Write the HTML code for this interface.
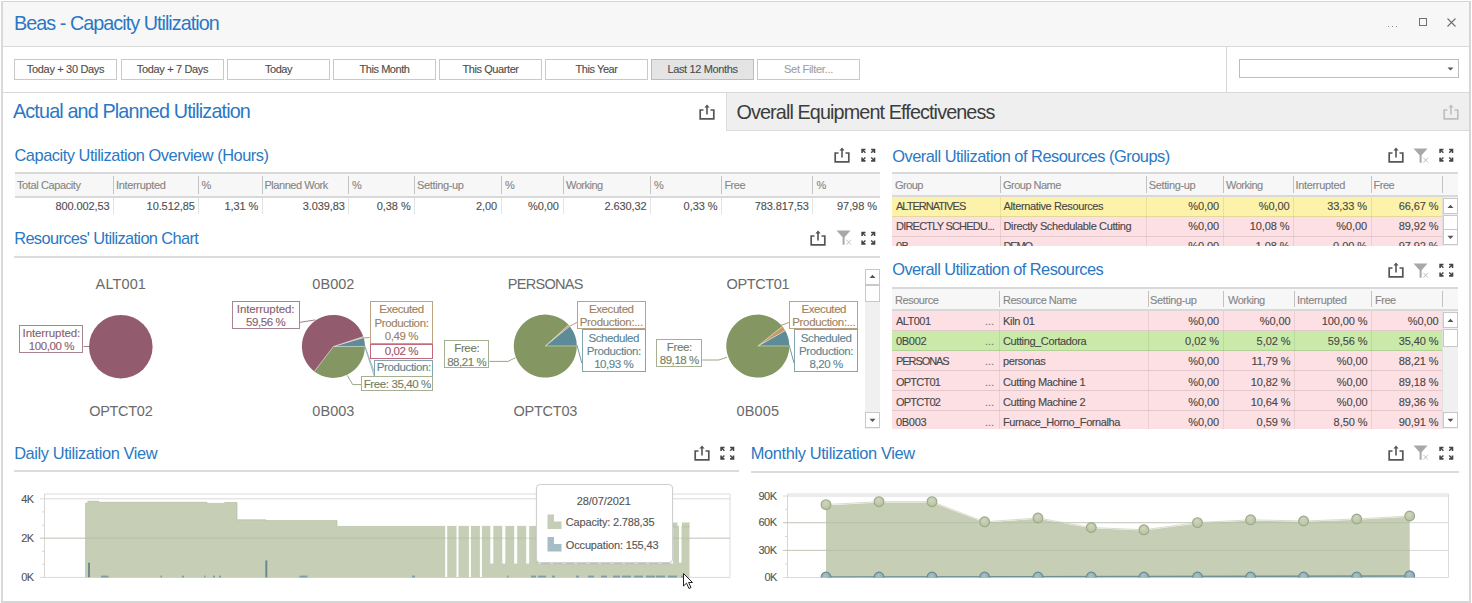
<!DOCTYPE html>
<html><head><meta charset="utf-8">
<style>
*{box-sizing:border-box;margin:0;padding:0}
html,body{width:1472px;height:603px;overflow:hidden;background:#fff;font-family:"Liberation Sans", sans-serif}
.a{position:absolute}
.t{position:absolute;white-space:nowrap;-webkit-text-stroke:0.12px currentColor}
</style></head><body>
<div class="a" style="left:0px;top:0px;width:1472px;height:603px;background:#ffffff;"></div><div class="a" style="left:1px;top:1px;width:1470px;height:45px;background:#f7f7f7;"></div><div class="a" style="left:1px;top:46px;width:1470px;height:1px;background:#dadada;"></div><div class="a" style="left:1388px;top:26px;width:1px;height:1px;background:#8a8a8a;"></div><div class="a" style="left:1392px;top:26px;width:1px;height:1px;background:#8a8a8a;"></div><div class="a" style="left:1396px;top:26px;width:1px;height:1px;background:#8a8a8a;"></div><div class="a" style="left:1419px;top:18px;width:8px;height:8px;border:1px solid #707070;background:transparent;border-width:1.3px"></div><svg class="a" style="left:1447px;top:18px" width="10" height="10"><path d="M0.5 0.5L8.5 8.5M8.5 0.5L0.5 8.5" stroke="#707070" stroke-width="1.1"/></svg><div class="a" style="left:1px;top:91.5px;width:1470px;height:1.8px;background:#d9d9d9;"></div><div class="a" style="left:1226px;top:47px;width:1px;height:45px;background:#d6d6d6;"></div><div class="a" style="left:14px;top:59px;width:103px;height:21px;border:1px solid #c9c9c9;background:#ffffff;"></div><div class="a" style="left:121px;top:59px;width:103px;height:21px;border:1px solid #c9c9c9;background:#ffffff;"></div><div class="a" style="left:227px;top:59px;width:103px;height:21px;border:1px solid #c9c9c9;background:#ffffff;"></div><div class="a" style="left:333px;top:59px;width:103px;height:21px;border:1px solid #c9c9c9;background:#ffffff;"></div><div class="a" style="left:439px;top:59px;width:103px;height:21px;border:1px solid #c9c9c9;background:#ffffff;"></div><div class="a" style="left:545px;top:59px;width:103px;height:21px;border:1px solid #c9c9c9;background:#ffffff;"></div><div class="a" style="left:651px;top:59px;width:103px;height:21px;border:1px solid #bdbdbd;background:#e4e4e4;"></div><div class="a" style="left:757px;top:59px;width:103px;height:21px;border:1px solid #c9c9c9;background:#ffffff;"></div><div class="a" style="left:1239px;top:59px;width:220px;height:19px;border:1px solid #bdbdbd;background:#fff;"></div><svg class="a" style="left:1447px;top:67px" width="8" height="4"><path d="M0.5 0.5L6.5 0.5L3.5 3.5Z" fill="#555"/></svg><div class="a" style="left:726px;top:93px;width:745px;height:37px;background:#efefef;"></div><div class="a" style="left:726px;top:93px;width:1px;height:38px;background:#dedede;"></div><div class="a" style="left:726px;top:130px;width:745px;height:1px;background:#dcdcdc;"></div><svg class="a" style="left:699px;top:104px" width="16" height="16" viewBox="0 0 16 16"><path d="M4.5 6H1.2V14.8H14.8V6H11.5" fill="none" stroke="#555555" stroke-width="1.7"/><path d="M8 2V10.5" stroke="#555555" stroke-width="1.6"/><path d="M5.4 3.6L8 0.6L10.6 3.6Z" fill="#555555"/></svg><svg class="a" style="left:1443px;top:104px" width="16" height="16" viewBox="0 0 16 16"><path d="M4.5 6H1.2V14.8H14.8V6H11.5" fill="none" stroke="#bfbfbf" stroke-width="1.7"/><path d="M8 2V10.5" stroke="#bfbfbf" stroke-width="1.6"/><path d="M5.4 3.6L8 0.6L10.6 3.6Z" fill="#bfbfbf"/></svg><svg class="a" style="left:834px;top:147px" width="16" height="16" viewBox="0 0 16 16"><path d="M4.5 6H1.2V14.8H14.8V6H11.5" fill="none" stroke="#555555" stroke-width="1.7"/><path d="M8 2V10.5" stroke="#555555" stroke-width="1.6"/><path d="M5.4 3.6L8 0.6L10.6 3.6Z" fill="#555555"/></svg><svg class="a" style="left:861px;top:148px" width="15" height="14" viewBox="0 0 15 14"><g fill="#444444" transform="translate(0.3 0.7)"><path d="M0 0H4.2V1.6H2.6L4.6 3.6L3.6 4.6L1.6 2.6V4.2H0Z"/><path d="M14 0H9.8V1.6H11.4L9.4 3.6L10.4 4.6L12.4 2.6V4.2H14Z"/><path d="M0 13H4.2V11.4H2.6L4.6 9.4L3.6 8.4L1.6 10.4V8.8H0Z"/><path d="M14 13H9.8V11.4H11.4L9.4 9.4L10.4 8.4L12.4 10.4V8.8H14Z"/></g></svg><div class="a" style="left:15px;top:172px;width:865px;height:2px;background:#d9d9d9;"></div><div class="a" style="left:15px;top:174px;width:865px;height:22px;background:#f7f7f7;"></div><div class="a" style="left:15px;top:196px;width:865px;height:2px;background:#d9d9d9;"></div><div class="a" style="left:113px;top:176px;width:1px;height:18px;background:#c4c4c4;"></div><div class="a" style="left:113px;top:198px;width:1px;height:16px;background:#e4e4e4;"></div><div class="a" style="left:198px;top:176px;width:1px;height:18px;background:#c4c4c4;"></div><div class="a" style="left:198px;top:198px;width:1px;height:16px;background:#e4e4e4;"></div><div class="a" style="left:262px;top:176px;width:1px;height:18px;background:#c4c4c4;"></div><div class="a" style="left:262px;top:198px;width:1px;height:16px;background:#e4e4e4;"></div><div class="a" style="left:348px;top:176px;width:1px;height:18px;background:#c4c4c4;"></div><div class="a" style="left:348px;top:198px;width:1px;height:16px;background:#e4e4e4;"></div><div class="a" style="left:414px;top:176px;width:1px;height:18px;background:#c4c4c4;"></div><div class="a" style="left:414px;top:198px;width:1px;height:16px;background:#e4e4e4;"></div><div class="a" style="left:501px;top:176px;width:1px;height:18px;background:#c4c4c4;"></div><div class="a" style="left:501px;top:198px;width:1px;height:16px;background:#e4e4e4;"></div><div class="a" style="left:563px;top:176px;width:1px;height:18px;background:#c4c4c4;"></div><div class="a" style="left:563px;top:198px;width:1px;height:16px;background:#e4e4e4;"></div><div class="a" style="left:650px;top:176px;width:1px;height:18px;background:#c4c4c4;"></div><div class="a" style="left:650px;top:198px;width:1px;height:16px;background:#e4e4e4;"></div><div class="a" style="left:721px;top:176px;width:1px;height:18px;background:#c4c4c4;"></div><div class="a" style="left:721px;top:198px;width:1px;height:16px;background:#e4e4e4;"></div><div class="a" style="left:812px;top:176px;width:1px;height:18px;background:#c4c4c4;"></div><div class="a" style="left:812px;top:198px;width:1px;height:16px;background:#e4e4e4;"></div><svg class="a" style="left:810px;top:230px" width="16" height="16" viewBox="0 0 16 16"><path d="M4.5 6H1.2V14.8H14.8V6H11.5" fill="none" stroke="#555555" stroke-width="1.7"/><path d="M8 2V10.5" stroke="#555555" stroke-width="1.6"/><path d="M5.4 3.6L8 0.6L10.6 3.6Z" fill="#555555"/></svg><svg class="a" style="left:836px;top:230px" width="16" height="16" viewBox="0 0 16 16"><path d="M0.5 0.5H14.5L8.6 7.2V14.8H6.6V7.2Z" fill="#a8a8a8"/><path d="M10.4 9.8L15 14.6M15 9.8L10.4 14.6" stroke="#b8b8b8" stroke-width="0.9"/></svg><svg class="a" style="left:861px;top:231px" width="15" height="14" viewBox="0 0 15 14"><g fill="#444444" transform="translate(0.3 0.7)"><path d="M0 0H4.2V1.6H2.6L4.6 3.6L3.6 4.6L1.6 2.6V4.2H0Z"/><path d="M14 0H9.8V1.6H11.4L9.4 3.6L10.4 4.6L12.4 2.6V4.2H14Z"/><path d="M0 13H4.2V11.4H2.6L4.6 9.4L3.6 8.4L1.6 10.4V8.8H0Z"/><path d="M14 13H9.8V11.4H11.4L9.4 9.4L10.4 8.4L12.4 10.4V8.8H14Z"/></g></svg><div class="a" style="left:14px;top:256px;width:866px;height:2px;background:#dcdcdc;"></div><svg class="a" style="left:694px;top:445px" width="16" height="16" viewBox="0 0 16 16"><path d="M4.5 6H1.2V14.8H14.8V6H11.5" fill="none" stroke="#555555" stroke-width="1.7"/><path d="M8 2V10.5" stroke="#555555" stroke-width="1.6"/><path d="M5.4 3.6L8 0.6L10.6 3.6Z" fill="#555555"/></svg><svg class="a" style="left:720px;top:446px" width="15" height="14" viewBox="0 0 15 14"><g fill="#444444" transform="translate(0.3 0.7)"><path d="M0 0H4.2V1.6H2.6L4.6 3.6L3.6 4.6L1.6 2.6V4.2H0Z"/><path d="M14 0H9.8V1.6H11.4L9.4 3.6L10.4 4.6L12.4 2.6V4.2H14Z"/><path d="M0 13H4.2V11.4H2.6L4.6 9.4L3.6 8.4L1.6 10.4V8.8H0Z"/><path d="M14 13H9.8V11.4H11.4L9.4 9.4L10.4 8.4L12.4 10.4V8.8H14Z"/></g></svg><div class="a" style="left:14px;top:470px;width:725px;height:2px;background:#dcdcdc;"></div><svg class="a" style="left:1388px;top:445px" width="16" height="16" viewBox="0 0 16 16"><path d="M4.5 6H1.2V14.8H14.8V6H11.5" fill="none" stroke="#555555" stroke-width="1.7"/><path d="M8 2V10.5" stroke="#555555" stroke-width="1.6"/><path d="M5.4 3.6L8 0.6L10.6 3.6Z" fill="#555555"/></svg><svg class="a" style="left:1413px;top:445px" width="16" height="16" viewBox="0 0 16 16"><path d="M0.5 0.5H14.5L8.6 7.2V14.8H6.6V7.2Z" fill="#a8a8a8"/><path d="M10.4 9.8L15 14.6M15 9.8L10.4 14.6" stroke="#b8b8b8" stroke-width="0.9"/></svg><svg class="a" style="left:1439px;top:446px" width="15" height="14" viewBox="0 0 15 14"><g fill="#444444" transform="translate(0.3 0.7)"><path d="M0 0H4.2V1.6H2.6L4.6 3.6L3.6 4.6L1.6 2.6V4.2H0Z"/><path d="M14 0H9.8V1.6H11.4L9.4 3.6L10.4 4.6L12.4 2.6V4.2H14Z"/><path d="M0 13H4.2V11.4H2.6L4.6 9.4L3.6 8.4L1.6 10.4V8.8H0Z"/><path d="M14 13H9.8V11.4H11.4L9.4 9.4L10.4 8.4L12.4 10.4V8.8H14Z"/></g></svg><div class="a" style="left:751px;top:471px;width:708px;height:2px;background:#dcdcdc;"></div><svg class="a" style="left:1388px;top:147px" width="16" height="16" viewBox="0 0 16 16"><path d="M4.5 6H1.2V14.8H14.8V6H11.5" fill="none" stroke="#555555" stroke-width="1.7"/><path d="M8 2V10.5" stroke="#555555" stroke-width="1.6"/><path d="M5.4 3.6L8 0.6L10.6 3.6Z" fill="#555555"/></svg><svg class="a" style="left:1413px;top:148px" width="16" height="16" viewBox="0 0 16 16"><path d="M0.5 0.5H14.5L8.6 7.2V14.8H6.6V7.2Z" fill="#a8a8a8"/><path d="M10.4 9.8L15 14.6M15 9.8L10.4 14.6" stroke="#b8b8b8" stroke-width="0.9"/></svg><svg class="a" style="left:1439px;top:148px" width="15" height="14" viewBox="0 0 15 14"><g fill="#444444" transform="translate(0.3 0.7)"><path d="M0 0H4.2V1.6H2.6L4.6 3.6L3.6 4.6L1.6 2.6V4.2H0Z"/><path d="M14 0H9.8V1.6H11.4L9.4 3.6L10.4 4.6L12.4 2.6V4.2H14Z"/><path d="M0 13H4.2V11.4H2.6L4.6 9.4L3.6 8.4L1.6 10.4V8.8H0Z"/><path d="M14 13H9.8V11.4H11.4L9.4 9.4L10.4 8.4L12.4 10.4V8.8H14Z"/></g></svg><svg class="a" style="left:1388px;top:262px" width="16" height="16" viewBox="0 0 16 16"><path d="M4.5 6H1.2V14.8H14.8V6H11.5" fill="none" stroke="#555555" stroke-width="1.7"/><path d="M8 2V10.5" stroke="#555555" stroke-width="1.6"/><path d="M5.4 3.6L8 0.6L10.6 3.6Z" fill="#555555"/></svg><svg class="a" style="left:1413px;top:263px" width="16" height="16" viewBox="0 0 16 16"><path d="M0.5 0.5H14.5L8.6 7.2V14.8H6.6V7.2Z" fill="#a8a8a8"/><path d="M10.4 9.8L15 14.6M15 9.8L10.4 14.6" stroke="#b8b8b8" stroke-width="0.9"/></svg><svg class="a" style="left:1439px;top:263px" width="15" height="14" viewBox="0 0 15 14"><g fill="#444444" transform="translate(0.3 0.7)"><path d="M0 0H4.2V1.6H2.6L4.6 3.6L3.6 4.6L1.6 2.6V4.2H0Z"/><path d="M14 0H9.8V1.6H11.4L9.4 3.6L10.4 4.6L12.4 2.6V4.2H14Z"/><path d="M0 13H4.2V11.4H2.6L4.6 9.4L3.6 8.4L1.6 10.4V8.8H0Z"/><path d="M14 13H9.8V11.4H11.4L9.4 9.4L10.4 8.4L12.4 10.4V8.8H14Z"/></g></svg><div class="a" style="left:892px;top:172px;width:566px;height:2px;background:#d9d9d9;"></div><div class="a" style="left:892px;top:174px;width:566px;height:21px;background:#f7f7f7;"></div><div class="a" style="left:892px;top:195px;width:566px;height:2px;background:#d9d9d9;"></div><div class="a" style="left:999.5px;top:176px;width:1px;height:17px;background:#c2c2c2;"></div><div class="a" style="left:1146px;top:176px;width:1px;height:17px;background:#c2c2c2;"></div><div class="a" style="left:1222.5px;top:176px;width:1px;height:17px;background:#c2c2c2;"></div><div class="a" style="left:1293px;top:176px;width:1px;height:17px;background:#c2c2c2;"></div><div class="a" style="left:1370.5px;top:176px;width:1px;height:17px;background:#c2c2c2;"></div><div class="a" style="left:1442px;top:176px;width:1px;height:17px;background:#c2c2c2;"></div><div class="a" style="left:892px;top:197px;width:566px;height:48.5px;overflow:hidden"><div class="a" style="left:0;top:0px;width:550px;height:19.8px;background:#fdf2aa;border-bottom:1px solid rgba(0,0,0,0.1)"></div><div class="a" style="left:107.5px;top:0px;width:1px;height:19.8px;background:rgba(0,0,0,0.07)"></div><div class="a" style="left:254px;top:0px;width:1px;height:19.8px;background:rgba(0,0,0,0.07)"></div><div class="a" style="left:330.5px;top:0px;width:1px;height:19.8px;background:rgba(0,0,0,0.07)"></div><div class="a" style="left:401px;top:0px;width:1px;height:19.8px;background:rgba(0,0,0,0.07)"></div><div class="a" style="left:478.5px;top:0px;width:1px;height:19.8px;background:rgba(0,0,0,0.07)"></div><div class="t" style="font-size:11px;color:#474747;letter-spacing:-0.963px;left:4px;top:3.24px;line-height:12.6px">ALTERNATIVES</div><div class="t" style="font-size:11px;color:#474747;letter-spacing:-0.378px;left:111.5px;top:3.24px;line-height:12.6px">Alternative Resources</div><div class="t" style="font-size:11px;color:#474747;letter-spacing:-0.073px;right:239.0px;top:3.24px;line-height:12.6px">%0,00</div><div class="t" style="font-size:11px;color:#474747;letter-spacing:-0.073px;right:168.5px;top:3.24px;line-height:12.6px">%0,00</div><div class="t" style="font-size:11px;color:#474747;letter-spacing:-0.070px;right:91.0px;top:3.24px;line-height:12.6px">33,33 %</div><div class="t" style="font-size:11px;color:#474747;letter-spacing:-0.070px;right:19.5px;top:3.24px;line-height:12.6px">66,67 %</div><div class="a" style="left:0;top:19.8px;width:550px;height:19.8px;background:#fde0e4;border-bottom:1px solid rgba(0,0,0,0.1)"></div><div class="a" style="left:107.5px;top:19.8px;width:1px;height:19.8px;background:rgba(0,0,0,0.07)"></div><div class="a" style="left:254px;top:19.8px;width:1px;height:19.8px;background:rgba(0,0,0,0.07)"></div><div class="a" style="left:330.5px;top:19.8px;width:1px;height:19.8px;background:rgba(0,0,0,0.07)"></div><div class="a" style="left:401px;top:19.8px;width:1px;height:19.8px;background:rgba(0,0,0,0.07)"></div><div class="a" style="left:478.5px;top:19.8px;width:1px;height:19.8px;background:rgba(0,0,0,0.07)"></div><div class="t" style="font-size:11px;color:#474747;letter-spacing:-0.784px;left:4px;top:23.05px;line-height:12.6px">DIRECTLY SCHEDU...</div><div class="t" style="font-size:11px;color:#474747;letter-spacing:-0.369px;left:111.5px;top:23.05px;line-height:12.6px">Directly Schedulable Cutting</div><div class="t" style="font-size:11px;color:#474747;letter-spacing:-0.073px;right:239.0px;top:23.05px;line-height:12.6px">%0,00</div><div class="t" style="font-size:11px;color:#474747;letter-spacing:-0.070px;right:168.5px;top:23.05px;line-height:12.6px">10,08 %</div><div class="t" style="font-size:11px;color:#474747;letter-spacing:-0.073px;right:91.0px;top:23.05px;line-height:12.6px">%0,00</div><div class="t" style="font-size:11px;color:#474747;letter-spacing:-0.070px;right:19.5px;top:23.05px;line-height:12.6px">89,92 %</div><div class="a" style="left:0;top:39.6px;width:550px;height:19.8px;background:#fde0e4;border-bottom:1px solid rgba(0,0,0,0.1)"></div><div class="a" style="left:107.5px;top:39.6px;width:1px;height:19.8px;background:rgba(0,0,0,0.07)"></div><div class="a" style="left:254px;top:39.6px;width:1px;height:19.8px;background:rgba(0,0,0,0.07)"></div><div class="a" style="left:330.5px;top:39.6px;width:1px;height:19.8px;background:rgba(0,0,0,0.07)"></div><div class="a" style="left:401px;top:39.6px;width:1px;height:19.8px;background:rgba(0,0,0,0.07)"></div><div class="a" style="left:478.5px;top:39.6px;width:1px;height:19.8px;background:rgba(0,0,0,0.07)"></div><div class="t" style="font-size:11px;color:#474747;letter-spacing:-0.575px;left:4px;top:42.84px;line-height:12.6px">0B</div><div class="t" style="font-size:11px;color:#474747;letter-spacing:-1.155px;left:111.5px;top:42.84px;line-height:12.6px">DEMO</div><div class="t" style="font-size:11px;color:#474747;letter-spacing:-0.073px;right:239.0px;top:42.84px;line-height:12.6px">%0,00</div><div class="t" style="font-size:11px;color:#474747;letter-spacing:-0.061px;right:168.5px;top:42.84px;line-height:12.6px">1,08 %</div><div class="t" style="font-size:11px;color:#474747;letter-spacing:-0.061px;right:91.0px;top:42.84px;line-height:12.6px">0,00 %</div><div class="t" style="font-size:11px;color:#474747;letter-spacing:-0.070px;right:19.5px;top:42.84px;line-height:12.6px">97,92 %</div><div class="a" style="left:550px;top:0;width:16px;height:48.5px;background:#f0f0f0;border-left:1px solid #e0e0e0"></div><div class="a" style="left:551px;top:1px;width:15px;height:16px;background:#fff;border:1px solid #c8c8c8"></div><svg class="a" style="left:555px;top:7px" width="8" height="5"><path d="M0.5 4L3.5 0.8L6.5 4Z" fill="#555"/></svg><div class="a" style="left:551px;top:18px;width:15px;height:18px;background:#fff;border:1px solid #c8c8c8"></div><div class="a" style="left:551px;top:31.5px;width:15px;height:16px;background:#fff;border:1px solid #c8c8c8"></div><svg class="a" style="left:555px;top:37.5px" width="8" height="5"><path d="M0.5 0.8L3.5 4L6.5 0.8Z" fill="#555"/></svg></div><div class="a" style="left:892px;top:287px;width:566px;height:2px;background:#d9d9d9;"></div><div class="a" style="left:892px;top:289px;width:566px;height:20px;background:#f7f7f7;"></div><div class="a" style="left:892px;top:309px;width:566px;height:2px;background:#d9d9d9;"></div><div class="a" style="left:999px;top:291px;width:1px;height:16px;background:#c2c2c2;"></div><div class="a" style="left:1148px;top:291px;width:1px;height:16px;background:#c2c2c2;"></div><div class="a" style="left:1222.5px;top:291px;width:1px;height:16px;background:#c2c2c2;"></div><div class="a" style="left:1294px;top:291px;width:1px;height:16px;background:#c2c2c2;"></div><div class="a" style="left:1371px;top:291px;width:1px;height:16px;background:#c2c2c2;"></div><div class="a" style="left:1442px;top:291px;width:1px;height:16px;background:#c2c2c2;"></div><div class="a" style="left:892px;top:311px;width:566px;height:117.5px;overflow:hidden"><div class="a" style="left:0;top:0px;width:550px;height:20.05px;background:#fde0e4;border-bottom:1px solid rgba(0,0,0,0.1)"></div><div class="a" style="left:107px;top:0px;width:1px;height:20.05px;background:rgba(0,0,0,0.07)"></div><div class="a" style="left:256px;top:0px;width:1px;height:20.05px;background:rgba(0,0,0,0.07)"></div><div class="a" style="left:330.5px;top:0px;width:1px;height:20.05px;background:rgba(0,0,0,0.07)"></div><div class="a" style="left:402px;top:0px;width:1px;height:20.05px;background:rgba(0,0,0,0.07)"></div><div class="a" style="left:479px;top:0px;width:1px;height:20.05px;background:rgba(0,0,0,0.07)"></div><div class="t" style="font-size:11px;color:#474747;letter-spacing:-0.532px;left:4px;top:4.35px;line-height:12.6px">ALT001</div><div class="t" style="font-size:11px;color:#777;left:93px;top:4.35px;line-height:12.6px">...</div><div class="t" style="font-size:11px;color:#474747;letter-spacing:-0.284px;left:111px;top:4.35px;line-height:12.6px">Kiln 01</div><div class="t" style="font-size:11px;color:#474747;letter-spacing:-0.073px;right:239.0px;top:4.35px;line-height:12.6px">%0,00</div><div class="t" style="font-size:11px;color:#474747;letter-spacing:-0.073px;right:167.5px;top:4.35px;line-height:12.6px">%0,00</div><div class="t" style="font-size:11px;color:#474747;letter-spacing:-0.076px;right:90.5px;top:4.35px;line-height:12.6px">100,00 %</div><div class="t" style="font-size:11px;color:#474747;letter-spacing:-0.073px;right:19.5px;top:4.35px;line-height:12.6px">%0,00</div><div class="a" style="left:0;top:20.05px;width:550px;height:20.05px;background:#c9eaa9;border-bottom:1px solid rgba(0,0,0,0.1)"></div><div class="a" style="left:107px;top:20.05px;width:1px;height:20.05px;background:rgba(0,0,0,0.07)"></div><div class="a" style="left:256px;top:20.05px;width:1px;height:20.05px;background:rgba(0,0,0,0.07)"></div><div class="a" style="left:330.5px;top:20.05px;width:1px;height:20.05px;background:rgba(0,0,0,0.07)"></div><div class="a" style="left:402px;top:20.05px;width:1px;height:20.05px;background:rgba(0,0,0,0.07)"></div><div class="a" style="left:479px;top:20.05px;width:1px;height:20.05px;background:rgba(0,0,0,0.07)"></div><div class="t" style="font-size:11px;color:#474747;letter-spacing:-0.303px;left:4px;top:24.40px;line-height:12.6px">0B002</div><div class="t" style="font-size:11px;color:#777;left:93px;top:24.40px;line-height:12.6px">...</div><div class="t" style="font-size:11px;color:#474747;letter-spacing:-0.390px;left:111px;top:24.40px;line-height:12.6px">Cutting_Cortadora</div><div class="t" style="font-size:11px;color:#474747;letter-spacing:-0.061px;right:239.0px;top:24.40px;line-height:12.6px">0,02 %</div><div class="t" style="font-size:11px;color:#474747;letter-spacing:-0.061px;right:167.5px;top:24.40px;line-height:12.6px">5,02 %</div><div class="t" style="font-size:11px;color:#474747;letter-spacing:-0.070px;right:90.5px;top:24.40px;line-height:12.6px">59,56 %</div><div class="t" style="font-size:11px;color:#474747;letter-spacing:-0.070px;right:19.5px;top:24.40px;line-height:12.6px">35,40 %</div><div class="a" style="left:0;top:40.1px;width:550px;height:20.05px;background:#fde0e4;border-bottom:1px solid rgba(0,0,0,0.1)"></div><div class="a" style="left:107px;top:40.1px;width:1px;height:20.05px;background:rgba(0,0,0,0.07)"></div><div class="a" style="left:256px;top:40.1px;width:1px;height:20.05px;background:rgba(0,0,0,0.07)"></div><div class="a" style="left:330.5px;top:40.1px;width:1px;height:20.05px;background:rgba(0,0,0,0.07)"></div><div class="a" style="left:402px;top:40.1px;width:1px;height:20.05px;background:rgba(0,0,0,0.07)"></div><div class="a" style="left:479px;top:40.1px;width:1px;height:20.05px;background:rgba(0,0,0,0.07)"></div><div class="t" style="font-size:11px;color:#474747;letter-spacing:-1.070px;left:4px;top:44.45px;line-height:12.6px">PERSONAS</div><div class="t" style="font-size:11px;color:#777;left:93px;top:44.45px;line-height:12.6px">...</div><div class="t" style="font-size:11px;color:#474747;letter-spacing:-0.368px;left:111px;top:44.45px;line-height:12.6px">personas</div><div class="t" style="font-size:11px;color:#474747;letter-spacing:-0.073px;right:239.0px;top:44.45px;line-height:12.6px">%0,00</div><div class="t" style="font-size:11px;color:#474747;letter-spacing:-0.070px;right:167.5px;top:44.45px;line-height:12.6px">11,79 %</div><div class="t" style="font-size:11px;color:#474747;letter-spacing:-0.073px;right:90.5px;top:44.45px;line-height:12.6px">%0,00</div><div class="t" style="font-size:11px;color:#474747;letter-spacing:-0.070px;right:19.5px;top:44.45px;line-height:12.6px">88,21 %</div><div class="a" style="left:0;top:60.150000000000006px;width:550px;height:20.05px;background:#fde0e4;border-bottom:1px solid rgba(0,0,0,0.1)"></div><div class="a" style="left:107px;top:60.150000000000006px;width:1px;height:20.05px;background:rgba(0,0,0,0.07)"></div><div class="a" style="left:256px;top:60.150000000000006px;width:1px;height:20.05px;background:rgba(0,0,0,0.07)"></div><div class="a" style="left:330.5px;top:60.150000000000006px;width:1px;height:20.05px;background:rgba(0,0,0,0.07)"></div><div class="a" style="left:402px;top:60.150000000000006px;width:1px;height:20.05px;background:rgba(0,0,0,0.07)"></div><div class="a" style="left:479px;top:60.150000000000006px;width:1px;height:20.05px;background:rgba(0,0,0,0.07)"></div><div class="t" style="font-size:11px;color:#474747;letter-spacing:-0.780px;left:4px;top:64.50px;line-height:12.6px">OPTCT01</div><div class="t" style="font-size:11px;color:#777;left:93px;top:64.50px;line-height:12.6px">...</div><div class="t" style="font-size:11px;color:#474747;letter-spacing:-0.375px;left:111px;top:64.50px;line-height:12.6px">Cutting Machine 1</div><div class="t" style="font-size:11px;color:#474747;letter-spacing:-0.073px;right:239.0px;top:64.50px;line-height:12.6px">%0,00</div><div class="t" style="font-size:11px;color:#474747;letter-spacing:-0.070px;right:167.5px;top:64.50px;line-height:12.6px">10,82 %</div><div class="t" style="font-size:11px;color:#474747;letter-spacing:-0.073px;right:90.5px;top:64.50px;line-height:12.6px">%0,00</div><div class="t" style="font-size:11px;color:#474747;letter-spacing:-0.070px;right:19.5px;top:64.50px;line-height:12.6px">89,18 %</div><div class="a" style="left:0;top:80.2px;width:550px;height:20.05px;background:#fde0e4;border-bottom:1px solid rgba(0,0,0,0.1)"></div><div class="a" style="left:107px;top:80.2px;width:1px;height:20.05px;background:rgba(0,0,0,0.07)"></div><div class="a" style="left:256px;top:80.2px;width:1px;height:20.05px;background:rgba(0,0,0,0.07)"></div><div class="a" style="left:330.5px;top:80.2px;width:1px;height:20.05px;background:rgba(0,0,0,0.07)"></div><div class="a" style="left:402px;top:80.2px;width:1px;height:20.05px;background:rgba(0,0,0,0.07)"></div><div class="a" style="left:479px;top:80.2px;width:1px;height:20.05px;background:rgba(0,0,0,0.07)"></div><div class="t" style="font-size:11px;color:#474747;letter-spacing:-0.780px;left:4px;top:84.55px;line-height:12.6px">OPTCT02</div><div class="t" style="font-size:11px;color:#777;left:93px;top:84.55px;line-height:12.6px">...</div><div class="t" style="font-size:11px;color:#474747;letter-spacing:-0.375px;left:111px;top:84.55px;line-height:12.6px">Cutting Machine 2</div><div class="t" style="font-size:11px;color:#474747;letter-spacing:-0.073px;right:239.0px;top:84.55px;line-height:12.6px">%0,00</div><div class="t" style="font-size:11px;color:#474747;letter-spacing:-0.070px;right:167.5px;top:84.55px;line-height:12.6px">10,64 %</div><div class="t" style="font-size:11px;color:#474747;letter-spacing:-0.073px;right:90.5px;top:84.55px;line-height:12.6px">%0,00</div><div class="t" style="font-size:11px;color:#474747;letter-spacing:-0.070px;right:19.5px;top:84.55px;line-height:12.6px">89,36 %</div><div class="a" style="left:0;top:100.25px;width:550px;height:20.05px;background:#fde0e4;border-bottom:1px solid rgba(0,0,0,0.1)"></div><div class="a" style="left:107px;top:100.25px;width:1px;height:20.05px;background:rgba(0,0,0,0.07)"></div><div class="a" style="left:256px;top:100.25px;width:1px;height:20.05px;background:rgba(0,0,0,0.07)"></div><div class="a" style="left:330.5px;top:100.25px;width:1px;height:20.05px;background:rgba(0,0,0,0.07)"></div><div class="a" style="left:402px;top:100.25px;width:1px;height:20.05px;background:rgba(0,0,0,0.07)"></div><div class="a" style="left:479px;top:100.25px;width:1px;height:20.05px;background:rgba(0,0,0,0.07)"></div><div class="t" style="font-size:11px;color:#474747;letter-spacing:-0.303px;left:4px;top:104.59px;line-height:12.6px">0B003</div><div class="t" style="font-size:11px;color:#777;left:93px;top:104.59px;line-height:12.6px">...</div><div class="t" style="font-size:11px;color:#474747;letter-spacing:-0.409px;left:111px;top:104.59px;line-height:12.6px">Furnace_Horno_Fornalha</div><div class="t" style="font-size:11px;color:#474747;letter-spacing:-0.073px;right:239.0px;top:104.59px;line-height:12.6px">%0,00</div><div class="t" style="font-size:11px;color:#474747;letter-spacing:-0.061px;right:167.5px;top:104.59px;line-height:12.6px">0,59 %</div><div class="t" style="font-size:11px;color:#474747;letter-spacing:-0.061px;right:90.5px;top:104.59px;line-height:12.6px">8,50 %</div><div class="t" style="font-size:11px;color:#474747;letter-spacing:-0.070px;right:19.5px;top:104.59px;line-height:12.6px">90,91 %</div><div class="a" style="left:550px;top:0;width:16px;height:117.5px;background:#f0f0f0;border-left:1px solid #e0e0e0"></div><div class="a" style="left:551px;top:1px;width:15px;height:16px;background:#fff;border:1px solid #c8c8c8"></div><svg class="a" style="left:555px;top:7px" width="8" height="5"><path d="M0.5 4L3.5 0.8L6.5 4Z" fill="#555"/></svg><div class="a" style="left:551px;top:18px;width:15px;height:18px;background:#fff;border:1px solid #c8c8c8"></div><div class="a" style="left:551px;top:100.5px;width:15px;height:16px;background:#fff;border:1px solid #c8c8c8"></div><svg class="a" style="left:555px;top:106.5px" width="8" height="5"><path d="M0.5 0.8L3.5 4L6.5 0.8Z" fill="#555"/></svg></div><svg class="a" style="left:0;top:0" width="1472" height="603"><g stroke-width="1" fill="none"><path d="M83.5 346.5H89" stroke="#a77a8a"/><path d="M299.7 322.4L315.4 319.9" stroke="#a77a8a"/><path d="M362 338L369.7 337.5" stroke="#b99a72"/><path d="M363 341L374.3 376M364.5 345L374.3 372" stroke="#8fb0b8" stroke-width="0.9"/><path d="M347.4 375.5L352.7 384.6H361.4" stroke="#98a880"/><path d="M489.4 361.4H508L515.5 357.7" stroke="#98a880"/><path d="M567.7 327.3L576.9 322.4" stroke="#b99a72"/><path d="M576.9 344.8L581.8 363" stroke="#6f98a4"/><path d="M702.3 360H718.8L727.1 357.2" stroke="#98a880"/><path d="M779 326L789.4 322.4" stroke="#b99a72"/><path d="M789 344.8L794 363" stroke="#6f98a4"/></g><circle cx="120.8" cy="346.7" r="31.8" fill="#935c6e"/><path d="M333.4 346.4L314.27 371.42A31.5 31.5 0 0 0 364.90 346.40Z" fill="#849762"/><path d="M314.27 371.42L333.4 346.4L364.90 346.40" fill="none" stroke="#f4eee6" stroke-opacity="0.42" stroke-width="0.9"/><path d="M333.4 346.4L364.90 346.40A31.5 31.5 0 0 0 363.63 337.56Z" fill="#5d8b98"/><path d="M364.90 346.40L333.4 346.4L363.63 337.56" fill="none" stroke="#f4eee6" stroke-opacity="0.42" stroke-width="0.9"/><path d="M333.4 346.4L363.63 337.56A31.5 31.5 0 0 0 363.32 336.56Z" fill="#c49a68"/><path d="M363.63 337.56L333.4 346.4L363.32 336.56" fill="none" stroke="#f4eee6" stroke-opacity="0.42" stroke-width="0.9"/><path d="M333.4 346.4L363.32 336.56A31.5 31.5 0 1 0 314.27 371.42Z" fill="#935c6e"/><path d="M363.32 336.56L333.4 346.4L314.27 371.42" fill="none" stroke="#f4eee6" stroke-opacity="0.42" stroke-width="0.9"/><path d="M545.3 346.1L576.80 346.10A31.5 31.5 0 0 0 569.68 326.15Z" fill="#5d8b98"/><path d="M576.80 346.10L545.3 346.1L569.68 326.15" fill="none" stroke="#f4eee6" stroke-opacity="0.42" stroke-width="0.9"/><path d="M545.3 346.1L569.68 326.15A31.5 31.5 0 0 0 568.56 324.86Z" fill="#c49a68"/><path d="M569.68 326.15L545.3 346.1L568.56 324.86" fill="none" stroke="#f4eee6" stroke-opacity="0.42" stroke-width="0.9"/><path d="M545.3 346.1L568.56 324.86A31.5 31.5 0 1 0 576.80 346.10Z" fill="#849762"/><path d="M568.56 324.86L545.3 346.1L576.80 346.10" fill="none" stroke="#f4eee6" stroke-opacity="0.42" stroke-width="0.9"/><path d="M757.8 346.1L789.30 346.10A31.5 31.5 0 0 0 785.22 330.59Z" fill="#5d8b98"/><path d="M789.30 346.10L757.8 346.1L785.22 330.59" fill="none" stroke="#f4eee6" stroke-opacity="0.42" stroke-width="0.9"/><path d="M757.8 346.1L785.22 330.59A31.5 31.5 0 0 0 782.31 326.32Z" fill="#c49a68"/><path d="M785.22 330.59L757.8 346.1L782.31 326.32" fill="none" stroke="#f4eee6" stroke-opacity="0.42" stroke-width="0.9"/><path d="M757.8 346.1L782.31 326.32A31.5 31.5 0 1 0 789.30 346.10Z" fill="#849762"/><path d="M782.31 326.32L757.8 346.1L789.30 346.10" fill="none" stroke="#f4eee6" stroke-opacity="0.42" stroke-width="0.9"/></svg><div class="a" style="left:19.3px;top:324.7px;width:64.2px;height:28.69999999999999px;border:1px solid #a98594;background:#fff"></div><div class="a" style="left:231.6px;top:300.8px;width:68.1px;height:28.69999999999999px;border:1px solid #a98594;background:#fff"></div><div class="a" style="left:369.7px;top:301.3px;width:63.5px;height:42.30000000000001px;border:1px solid #bca483;background:#fff"></div><div class="a" style="left:374.3px;top:359.7px;width:58.89999999999998px;height:17.100000000000023px;border:1px solid #82a5ae;background:#fff"></div><div class="a" style="left:369.7px;top:343.6px;width:63.5px;height:15.899999999999977px;border:1px solid #c4687c;background:#fff"></div><div class="a" style="left:361.4px;top:376.3px;width:71.80000000000001px;height:14.899999999999977px;border:1px solid #a5b092;background:#fff"></div><div class="a" style="left:444.1px;top:340.1px;width:45.299999999999955px;height:28.19999999999999px;border:1px solid #a5b092;background:#fff"></div><div class="a" style="left:581.8px;top:329px;width:63.90000000000009px;height:42.60000000000002px;border:1px solid #82a5ae;background:#fff"></div><div class="a" style="left:576.9px;top:300.8px;width:68.80000000000007px;height:28.19999999999999px;border:1px solid #bca483;background:#fff"></div><div class="a" style="left:656.3px;top:338.5px;width:46.0px;height:28.69999999999999px;border:1px solid #a5b092;background:#fff"></div><div class="a" style="left:794px;top:329px;width:64.20000000000005px;height:42.60000000000002px;border:1px solid #82a5ae;background:#fff"></div><div class="a" style="left:789.4px;top:300.8px;width:68.80000000000007px;height:28.19999999999999px;border:1px solid #bca483;background:#fff"></div><div class="a" style="left:865px;top:269px;width:15px;height:160px;background:#f0f0f0;"></div><div class="a" style="left:865px;top:269px;width:15px;height:16px;border:1px solid #c8c8c8;background:#fff;"></div><svg class="a" style="left:869px;top:274px" width="8" height="5"><path d="M0.5 4L3.5 0.8L6.5 4Z" fill="#555"/></svg><div class="a" style="left:865px;top:285px;width:15px;height:17px;border:1px solid #c8c8c8;background:#fff;"></div><div class="a" style="left:865px;top:412px;width:15px;height:16px;border:1px solid #c8c8c8;background:#fff;"></div><svg class="a" style="left:869px;top:418px" width="8" height="5"><path d="M0.5 0.8L3.5 4L6.5 0.8Z" fill="#555"/></svg><svg class="a" style="left:0;top:0" width="1472" height="603"><path d="M44.5 494H730V577.5" fill="none" stroke="#dcdcdc"/><path d="M40 498.8H730M40 538.2H730M40 577.4H730" stroke="#d9d9d9"/><path d="M44.5 494V577.5" stroke="#d6d6d6"/><path d="M42 511.9H44.5M42 525.3H44.5M42 551.3H44.5M42 564.3H44.5" stroke="#d6d6d6"/><path d="M85 503.2L87.8 503.2L87.8 501.3L98.7 501.3L98.7 502.3L207 502.3L207 503.4L224.7 503.4L224.7 502.5L237 502.5L237 519.8L266 519.8L266 520.6L337 520.6L337 526.4L689.5 526.4L689.5 577.4L85 577.4Z" fill="#b9c4a6" fill-opacity="0.82"/><path d="M85 503.2L87.8 503.2L87.8 501.3L98.7 501.3L98.7 502.3L207 502.3L207 503.4L224.7 503.4L224.7 502.5L237 502.5L237 519.8L266 519.8L266 520.6L337 520.6L337 526.4L689.5 526.4" fill="none" stroke="#aeb99a" stroke-width="1" stroke-opacity="0.6"/><rect x="445.2" y="526" width="2" height="51" fill="#fff"/><rect x="456.5" y="526" width="2" height="51" fill="#fff"/><rect x="468.9" y="526" width="2" height="51" fill="#fff"/><rect x="479.9" y="526" width="2" height="51" fill="#fff"/><rect x="490.3" y="526" width="3" height="37.6" fill="#fff"/><rect x="502.3" y="526" width="3" height="37.6" fill="#fff"/><rect x="514.1999999999999" y="526" width="3" height="37.6" fill="#fff"/><rect x="526.1999999999999" y="526" width="3" height="37.6" fill="#fff"/><rect x="538.1999999999999" y="526" width="3" height="37.6" fill="#fff"/><rect x="550.1999999999999" y="526" width="3" height="37.6" fill="#fff"/><rect x="562.1999999999999" y="526" width="3" height="37.6" fill="#fff"/><rect x="574.1999999999999" y="526" width="3" height="37.6" fill="#fff"/><rect x="586.1999999999999" y="526" width="3" height="37.6" fill="#fff"/><rect x="598.1999999999999" y="526" width="3" height="37.6" fill="#fff"/><rect x="610.1999999999999" y="526" width="3" height="37.6" fill="#fff"/><rect x="622.1999999999999" y="526" width="3" height="37.6" fill="#fff"/><rect x="634.1999999999999" y="526" width="3" height="37.6" fill="#fff"/><rect x="646.1999999999999" y="526" width="3" height="37.6" fill="#fff"/><rect x="658.1999999999999" y="526" width="3" height="37.6" fill="#fff"/><rect x="670.1999999999999" y="526" width="3" height="37.6" fill="#fff"/><rect x="672.5" y="522.5" width="5" height="5" fill="#b9c4a6" fill-opacity="0.82"/><rect x="679" y="526" width="2.5" height="36.6" fill="#fff"/><rect x="682" y="522.5" width="7.5" height="5" fill="#b9c4a6" fill-opacity="0.82"/><path d="M40 538.2H730" stroke="#b3bb9f" stroke-opacity="0.5"/><rect x="88" y="562.7" width="2" height="14.5" fill="#6c8b8f"/><rect x="265.3" y="560.4" width="2" height="17" fill="#6c8b8f"/><rect x="101" y="575.6" width="7.5" height="1.8" fill="#7f9c9e"/><rect x="160.5" y="575.6" width="1.5" height="1.8" fill="#7f9c9e"/><rect x="182" y="575.6" width="2" height="1.8" fill="#7f9c9e"/><rect x="204" y="575.6" width="1.5" height="1.8" fill="#7f9c9e"/><rect x="213" y="575.6" width="2" height="1.8" fill="#7f9c9e"/><rect x="219" y="575.6" width="2" height="1.8" fill="#7f9c9e"/><rect x="299.5" y="575.6" width="8.0" height="1.8" fill="#7f9c9e"/><rect x="412" y="575.6" width="3" height="1.8" fill="#7f9c9e"/><rect x="507" y="575.6" width="1.5" height="1.8" fill="#7f9c9e"/><rect x="531" y="575.6" width="5" height="1.8" fill="#7f9c9e"/><rect x="538" y="575.6" width="8" height="1.8" fill="#7f9c9e"/><rect x="552" y="575.6" width="3" height="1.8" fill="#7f9c9e"/><rect x="576" y="575.6" width="3" height="1.8" fill="#7f9c9e"/><rect x="588" y="575.6" width="6" height="1.8" fill="#7f9c9e"/><rect x="601" y="575.6" width="6" height="1.8" fill="#7f9c9e"/><rect x="613" y="575.6" width="7" height="1.8" fill="#7f9c9e"/><rect x="622" y="575.6" width="9" height="1.8" fill="#7f9c9e"/><rect x="634" y="575.6" width="9" height="1.8" fill="#7f9c9e"/><rect x="646" y="575.6" width="9" height="1.8" fill="#7f9c9e"/><rect x="656" y="575.6" width="9" height="1.8" fill="#7f9c9e"/><rect x="668" y="575.6" width="9" height="1.8" fill="#7f9c9e"/><rect x="681" y="575.6" width="3" height="1.8" fill="#7f9c9e"/></svg><div class="a" style="left:536px;top:484px;width:137px;height:79px;background:#fff;border:1px solid #cfcfcf;border-radius:4px;box-shadow:0 1px 2px rgba(0,0,0,0.08)"></div><svg class="a" style="left:547px;top:514px" width="15" height="38"><path d="M0.5 0.5H7V7.5H14.5V15H0.5Z" fill="#c5cdb6"/><path d="M0.5 23H7V30H14.5V37.5H0.5Z" fill="#a7bdc6"/></svg><svg class="a" style="left:683px;top:573px" width="12" height="17"><path d="M0.5 0.5V13L3.5 10.2L6 15.5L8 14.5L5.6 9.5H9.5Z" fill="#fff" stroke="#222" stroke-width="1"/></svg><svg class="a" style="left:0;top:0" width="1472" height="603"><path d="M787.5 494H1448.5V577.5" fill="none" stroke="#dcdcdc"/><path d="M783 496H1448.5M783 522.7H1448.5M783 550.4H1448.5M783 577.6H1448.5" stroke="#d9d9d9"/><path d="M787.5 494V577.6" stroke="#d6d6d6"/><path d="M785 509.3H787.5M785 536.5H787.5M785 564H787.5" stroke="#d6d6d6"/><path d="M826 577.5L826 505.40000000000003L879 502.5L932 502.5L984.6 522.5999999999999L1038 518.8L1091.3 528.3L1143.9 530.5999999999999L1197.5 523.4L1250.6 520.5999999999999L1303.6 521.8L1356.7 519.8L1409.7 516.8L1409.7 577.5Z" fill="#b9c4a6" fill-opacity="0.82"/><path d="M826 504.6L879 501.7L932 501.7L984.6 521.8L1038 518L1091.3 527.5L1143.9 529.8L1197.5 522.6L1250.6 519.8L1303.6 521L1356.7 519L1409.7 516" fill="none" stroke="#d8dccd" stroke-width="1"/><path d="M783 522.7H1409.7M783 550.4H1409.7" stroke="#b3bb9f" stroke-opacity="0.5"/><circle cx="826" cy="504.6" r="4.9" fill="url(#mg)" stroke="#9ca886" stroke-width="1.1"/><circle cx="879" cy="501.7" r="4.9" fill="url(#mg)" stroke="#9ca886" stroke-width="1.1"/><circle cx="932" cy="501.7" r="4.9" fill="url(#mg)" stroke="#9ca886" stroke-width="1.1"/><circle cx="984.6" cy="521.8" r="4.9" fill="url(#mg)" stroke="#9ca886" stroke-width="1.1"/><circle cx="1038" cy="518" r="4.9" fill="url(#mg)" stroke="#9ca886" stroke-width="1.1"/><circle cx="1091.3" cy="527.5" r="4.9" fill="url(#mg)" stroke="#9ca886" stroke-width="1.1"/><circle cx="1143.9" cy="529.8" r="4.9" fill="url(#mg)" stroke="#9ca886" stroke-width="1.1"/><circle cx="1197.5" cy="522.6" r="4.9" fill="url(#mg)" stroke="#9ca886" stroke-width="1.1"/><circle cx="1250.6" cy="519.8" r="4.9" fill="url(#mg)" stroke="#9ca886" stroke-width="1.1"/><circle cx="1303.6" cy="521" r="4.9" fill="url(#mg)" stroke="#9ca886" stroke-width="1.1"/><circle cx="1356.7" cy="519" r="4.9" fill="url(#mg)" stroke="#9ca886" stroke-width="1.1"/><circle cx="1409.7" cy="516" r="4.9" fill="url(#mg)" stroke="#9ca886" stroke-width="1.1"/><defs><radialGradient id="mg" cx="0.45" cy="0.35" r="0.7"><stop offset="0" stop-color="#cfd6c0"/><stop offset="1" stop-color="#b3bf9c"/></radialGradient><radialGradient id="tg" cx="0.45" cy="0.35" r="0.7"><stop offset="0" stop-color="#a9c2c6"/><stop offset="1" stop-color="#7d9ea4"/></radialGradient></defs><defs><clipPath id="mc"><rect x="780" y="490" width="680" height="87.5"/></clipPath></defs><g clip-path="url(#mc)"><path d="M826 577L1409.7 576" stroke="#6f9196" stroke-width="1.4"/><circle cx="826" cy="577" r="4.9" fill="url(#tg)" stroke="#668b91" stroke-width="1.1"/><circle cx="879" cy="577" r="4.9" fill="url(#tg)" stroke="#668b91" stroke-width="1.1"/><circle cx="932" cy="577" r="4.9" fill="url(#tg)" stroke="#668b91" stroke-width="1.1"/><circle cx="984.6" cy="577" r="4.9" fill="url(#tg)" stroke="#668b91" stroke-width="1.1"/><circle cx="1038" cy="577" r="4.9" fill="url(#tg)" stroke="#668b91" stroke-width="1.1"/><circle cx="1091.3" cy="577" r="4.9" fill="url(#tg)" stroke="#668b91" stroke-width="1.1"/><circle cx="1143.9" cy="577" r="4.9" fill="url(#tg)" stroke="#668b91" stroke-width="1.1"/><circle cx="1197.5" cy="577" r="4.9" fill="url(#tg)" stroke="#668b91" stroke-width="1.1"/><circle cx="1250.6" cy="577" r="4.9" fill="url(#tg)" stroke="#668b91" stroke-width="1.1"/><circle cx="1303.6" cy="577" r="4.9" fill="url(#tg)" stroke="#668b91" stroke-width="1.1"/><circle cx="1356.7" cy="577" r="4.9" fill="url(#tg)" stroke="#668b91" stroke-width="1.1"/><circle cx="1409.7" cy="575.8" r="4.9" fill="url(#tg)" stroke="#668b91" stroke-width="1.1"/></g></svg><div class="a" style="left:1px;top:1px;width:1470px;height:1px;background:#d6d6d6;"></div><div class="a" style="left:1px;top:1px;width:2px;height:601px;background:#d9d9d9;"></div><div class="a" style="left:1469px;top:1px;width:2px;height:601px;background:#d6d6d6;"></div><div class="a" style="left:1px;top:601px;width:1470px;height:2px;background:#d6d6d6;"></div>
<div class="t" style="font-size:19.8px;color:#2a78c4;top:12.08px;line-height:22.75px;letter-spacing:-0.966px;-webkit-text-stroke:0;left:14px;">Beas - Capacity Utilization</div><div class="t" style="font-size:11px;color:#4d4d4d;top:63.45px;line-height:12.64px;letter-spacing:-0.331px;left:65.5px;transform:translateX(-50%);">Today + 30 Days</div><div class="t" style="font-size:11px;color:#4d4d4d;top:63.45px;line-height:12.64px;letter-spacing:-0.346px;left:172.5px;transform:translateX(-50%);">Today + 7 Days</div><div class="t" style="font-size:11px;color:#4d4d4d;top:63.45px;line-height:12.64px;letter-spacing:-0.498px;left:278.5px;transform:translateX(-50%);">Today</div><div class="t" style="font-size:11px;color:#4d4d4d;top:63.45px;line-height:12.64px;letter-spacing:-0.453px;left:384.5px;transform:translateX(-50%);">This Month</div><div class="t" style="font-size:11px;color:#4d4d4d;top:63.45px;line-height:12.64px;letter-spacing:-0.410px;left:490.5px;transform:translateX(-50%);">This Quarter</div><div class="t" style="font-size:11px;color:#4d4d4d;top:63.45px;line-height:12.64px;letter-spacing:-0.435px;left:596.5px;transform:translateX(-50%);">This Year</div><div class="t" style="font-size:11px;color:#4d4d4d;top:63.45px;line-height:12.64px;letter-spacing:-0.363px;left:702.5px;transform:translateX(-50%);">Last 12 Months</div><div class="t" style="font-size:11px;color:#a0a0a0;top:63.45px;line-height:12.64px;letter-spacing:-0.286px;left:808.5px;transform:translateX(-50%);">Set Filter...</div><div class="t" style="font-size:19.8px;color:#2a78c4;top:100.38px;line-height:22.75px;letter-spacing:-0.861px;-webkit-text-stroke:0;left:13px;">Actual and Planned Utilization</div><div class="t" style="font-size:19.8px;color:#3c3c3c;top:100.58px;line-height:22.75px;letter-spacing:-0.888px;-webkit-text-stroke:0;left:736.5px;">Overall Equipment Effectiveness</div><div class="t" style="font-size:16.4px;color:#2a78c4;top:146.36px;line-height:18.84px;letter-spacing:-0.471px;-webkit-text-stroke:0;left:14.5px;">Capacity Utilization Overview (Hours)</div><div class="t" style="font-size:11px;color:#868686;top:178.84px;line-height:12.64px;letter-spacing:-0.391px;left:17px;">Total Capacity</div><div class="t" style="font-size:11px;color:#868686;top:178.84px;line-height:12.64px;letter-spacing:-0.335px;left:116px;">Interrupted</div><div class="t" style="font-size:11px;color:#868686;top:178.84px;line-height:12.64px;left:201.5px;">%</div><div class="t" style="font-size:11px;color:#868686;top:178.84px;line-height:12.64px;letter-spacing:-0.468px;left:264.5px;">Planned Work</div><div class="t" style="font-size:11px;color:#868686;top:178.84px;line-height:12.64px;left:352px;">%</div><div class="t" style="font-size:11px;color:#868686;top:178.84px;line-height:12.64px;letter-spacing:-0.357px;left:417px;">Setting-up</div><div class="t" style="font-size:11px;color:#868686;top:178.84px;line-height:12.64px;left:505px;">%</div><div class="t" style="font-size:11px;color:#868686;top:178.84px;line-height:12.64px;letter-spacing:-0.486px;left:566px;">Working</div><div class="t" style="font-size:11px;color:#868686;top:178.84px;line-height:12.64px;left:654px;">%</div><div class="t" style="font-size:11px;color:#868686;top:178.84px;line-height:12.64px;letter-spacing:-0.494px;left:724.4px;">Free</div><div class="t" style="font-size:11px;color:#868686;top:178.84px;line-height:12.64px;left:816.5px;">%</div><div class="t" style="font-size:11px;color:#4f4f4f;top:199.94px;line-height:12.64px;letter-spacing:-0.098px;right:1362.5px;">800.002,53</div><div class="t" style="font-size:11px;color:#4f4f4f;top:199.94px;line-height:12.64px;letter-spacing:-0.095px;right:1277.3px;">10.512,85</div><div class="t" style="font-size:11px;color:#4f4f4f;top:199.94px;line-height:12.64px;letter-spacing:-0.061px;right:1213.7px;">1,31 %</div><div class="t" style="font-size:11px;color:#4f4f4f;top:199.94px;line-height:12.64px;letter-spacing:-0.092px;right:1127.2px;">3.039,83</div><div class="t" style="font-size:11px;color:#4f4f4f;top:199.94px;line-height:12.64px;letter-spacing:-0.061px;right:1061.4px;">0,38 %</div><div class="t" style="font-size:11px;color:#4f4f4f;top:199.94px;line-height:12.64px;letter-spacing:-0.092px;right:975px;">2,00</div><div class="t" style="font-size:11px;color:#4f4f4f;top:199.94px;line-height:12.64px;letter-spacing:-0.073px;right:913.25px;">%0,00</div><div class="t" style="font-size:11px;color:#4f4f4f;top:199.94px;line-height:12.64px;letter-spacing:-0.092px;right:825.4px;">2.630,32</div><div class="t" style="font-size:11px;color:#4f4f4f;top:199.94px;line-height:12.64px;letter-spacing:-0.061px;right:754.5px;">0,33 %</div><div class="t" style="font-size:11px;color:#4f4f4f;top:199.94px;line-height:12.64px;letter-spacing:-0.098px;right:663.25px;">783.817,53</div><div class="t" style="font-size:11px;color:#4f4f4f;top:199.94px;line-height:12.64px;letter-spacing:-0.070px;right:595.1px;">97,98 %</div><div class="t" style="font-size:16.4px;color:#2a78c4;top:228.86px;line-height:18.84px;letter-spacing:-0.633px;-webkit-text-stroke:0;left:14.2px;">Resources' Utilization Chart</div><div class="t" style="font-size:16.4px;color:#2a78c4;top:444.16px;line-height:18.84px;letter-spacing:-0.401px;-webkit-text-stroke:0;left:14.2px;">Daily Utilization View</div><div class="t" style="font-size:16.4px;color:#2a78c4;top:443.86px;line-height:18.84px;letter-spacing:-0.367px;-webkit-text-stroke:0;left:750.7px;">Monthly Utilization View</div><div class="t" style="font-size:16.4px;color:#2a78c4;top:146.56px;line-height:18.84px;letter-spacing:-0.497px;-webkit-text-stroke:0;left:892.2px;">Overall Utilization of Resources (Groups)</div><div class="t" style="font-size:16.4px;color:#2a78c4;top:260.16px;line-height:18.84px;letter-spacing:-0.552px;-webkit-text-stroke:0;left:892.2px;">Overall Utilization of Resources</div><div class="t" style="font-size:11px;color:#868686;top:178.64px;line-height:12.64px;letter-spacing:-0.526px;left:895px;">Group</div><div class="t" style="font-size:11px;color:#868686;top:178.64px;line-height:12.64px;letter-spacing:-0.513px;left:1003px;">Group Name</div><div class="t" style="font-size:11px;color:#868686;top:178.64px;line-height:12.64px;letter-spacing:-0.357px;left:1148.7px;">Setting-up</div><div class="t" style="font-size:11px;color:#868686;top:178.64px;line-height:12.64px;letter-spacing:-0.486px;left:1226px;">Working</div><div class="t" style="font-size:11px;color:#868686;top:178.64px;line-height:12.64px;letter-spacing:-0.335px;left:1295.5px;">Interrupted</div><div class="t" style="font-size:11px;color:#868686;top:178.64px;line-height:12.64px;letter-spacing:-0.494px;left:1373.6px;">Free</div><div class="t" style="font-size:11px;color:#868686;top:293.65px;line-height:12.64px;letter-spacing:-0.457px;left:895px;">Resource</div><div class="t" style="font-size:11px;color:#868686;top:293.65px;line-height:12.64px;letter-spacing:-0.474px;left:1003px;">Resource Name</div><div class="t" style="font-size:11px;color:#868686;top:293.65px;line-height:12.64px;letter-spacing:-0.357px;left:1150px;">Setting-up</div><div class="t" style="font-size:11px;color:#868686;top:293.65px;line-height:12.64px;letter-spacing:-0.486px;left:1228px;">Working</div><div class="t" style="font-size:11px;color:#868686;top:293.65px;line-height:12.64px;letter-spacing:-0.335px;left:1297px;">Interrupted</div><div class="t" style="font-size:11px;color:#868686;top:293.65px;line-height:12.64px;letter-spacing:-0.494px;left:1375px;">Free</div><div class="t" style="font-size:14.5px;color:#6a6a6a;top:276.08px;line-height:16.66px;letter-spacing:0.114px;-webkit-text-stroke:0;left:120.8px;transform:translateX(-50%);">ALT001</div><div class="t" style="font-size:14.5px;color:#6a6a6a;top:276.08px;line-height:16.66px;letter-spacing:0.053px;-webkit-text-stroke:0;left:333.4px;transform:translateX(-50%);">0B002</div><div class="t" style="font-size:14.5px;color:#6a6a6a;top:276.08px;line-height:16.66px;letter-spacing:-0.699px;-webkit-text-stroke:0;left:545.3px;transform:translateX(-50%);">PERSONAS</div><div class="t" style="font-size:14.5px;color:#6a6a6a;top:276.08px;line-height:16.66px;letter-spacing:-0.395px;-webkit-text-stroke:0;left:757.8px;transform:translateX(-50%);">OPTCT01</div><div class="t" style="font-size:14.5px;color:#6a6a6a;top:403.28px;line-height:16.66px;letter-spacing:-0.281px;-webkit-text-stroke:0;left:120.8px;transform:translateX(-50%);">OPTCT02</div><div class="t" style="font-size:14.5px;color:#6a6a6a;top:403.28px;line-height:16.66px;letter-spacing:0.053px;-webkit-text-stroke:0;left:333.4px;transform:translateX(-50%);">0B003</div><div class="t" style="font-size:14.5px;color:#6a6a6a;top:403.28px;line-height:16.66px;letter-spacing:-0.252px;-webkit-text-stroke:0;left:545.3px;transform:translateX(-50%);">OPTCT03</div><div class="t" style="font-size:14.5px;color:#6a6a6a;top:403.28px;line-height:16.66px;letter-spacing:0.172px;-webkit-text-stroke:0;left:757.8px;transform:translateX(-50%);">0B005</div><div class="t" style="font-size:11.5px;color:#88606f;top:327.19px;line-height:13.21px;letter-spacing:-0.098px;left:51.4px;transform:translateX(-50%);">Interrupted:</div><div class="t" style="font-size:11.5px;color:#88606f;top:340.39px;line-height:13.21px;letter-spacing:-0.425px;left:51.4px;transform:translateX(-50%);">100,00 %</div><div class="t" style="font-size:11.5px;color:#88606f;top:302.99px;line-height:13.21px;letter-spacing:-0.098px;left:265.65px;transform:translateX(-50%);">Interrupted:</div><div class="t" style="font-size:11.5px;color:#88606f;top:316.29px;line-height:13.21px;letter-spacing:-0.422px;left:265.65px;transform:translateX(-50%);">59,56 %</div><div class="t" style="font-size:11.5px;color:#9c8260;top:303.49px;line-height:13.21px;letter-spacing:-0.420px;left:401.45px;transform:translateX(-50%);">Executed</div><div class="t" style="font-size:11.5px;color:#9c8260;top:317.09px;line-height:13.21px;letter-spacing:-0.370px;left:401.45px;transform:translateX(-50%);">Production:</div><div class="t" style="font-size:11.5px;color:#9c8260;top:330.09px;line-height:13.21px;letter-spacing:-0.418px;left:401.45px;transform:translateX(-50%);">0,49 %</div><div class="t" style="font-size:11.5px;color:#5b8591;top:361.39px;line-height:13.21px;letter-spacing:-0.370px;left:403.75px;transform:translateX(-50%);">Production:</div><div class="t" style="font-size:11.5px;color:#9e5268;top:345.09px;line-height:13.21px;letter-spacing:-0.418px;left:401.45px;transform:translateX(-50%);">0,02 %</div><div class="t" style="font-size:11.5px;color:#737d5e;top:377.79px;line-height:13.21px;letter-spacing:-0.389px;left:397.29999999999995px;transform:translateX(-50%);">Free: 35,40 %</div><div class="t" style="font-size:11.5px;color:#737d5e;top:342.29px;line-height:13.21px;letter-spacing:-0.376px;left:466.75px;transform:translateX(-50%);">Free:</div><div class="t" style="font-size:11.5px;color:#737d5e;top:355.59px;line-height:13.21px;letter-spacing:-0.422px;left:466.75px;transform:translateX(-50%);">88,21 %</div><div class="t" style="font-size:11.5px;color:#5b8591;top:331.89px;line-height:13.21px;letter-spacing:-0.423px;left:613.75px;transform:translateX(-50%);">Scheduled</div><div class="t" style="font-size:11.5px;color:#5b8591;top:345.09px;line-height:13.21px;letter-spacing:-0.370px;left:613.75px;transform:translateX(-50%);">Production:</div><div class="t" style="font-size:11.5px;color:#5b8591;top:358.09px;line-height:13.21px;letter-spacing:-0.422px;left:613.75px;transform:translateX(-50%);">10,93 %</div><div class="t" style="font-size:11.5px;color:#9c8260;top:302.99px;line-height:13.21px;letter-spacing:-0.420px;left:611.3px;transform:translateX(-50%);">Executed</div><div class="t" style="font-size:11.5px;color:#9c8260;top:316.29px;line-height:13.21px;letter-spacing:-0.339px;left:611.3px;transform:translateX(-50%);">Production:...</div><div class="t" style="font-size:11.5px;color:#737d5e;top:340.79px;line-height:13.21px;letter-spacing:-0.376px;left:679.3px;transform:translateX(-50%);">Free:</div><div class="t" style="font-size:11.5px;color:#737d5e;top:354.09px;line-height:13.21px;letter-spacing:-0.422px;left:679.3px;transform:translateX(-50%);">89,18 %</div><div class="t" style="font-size:11.5px;color:#5b8591;top:331.89px;line-height:13.21px;letter-spacing:-0.423px;left:826.1px;transform:translateX(-50%);">Scheduled</div><div class="t" style="font-size:11.5px;color:#5b8591;top:345.09px;line-height:13.21px;letter-spacing:-0.370px;left:826.1px;transform:translateX(-50%);">Production:</div><div class="t" style="font-size:11.5px;color:#5b8591;top:358.09px;line-height:13.21px;letter-spacing:-0.418px;left:826.1px;transform:translateX(-50%);">8,20 %</div><div class="t" style="font-size:11.5px;color:#9c8260;top:302.99px;line-height:13.21px;letter-spacing:-0.420px;left:823.8px;transform:translateX(-50%);">Executed</div><div class="t" style="font-size:11.5px;color:#9c8260;top:316.29px;line-height:13.21px;letter-spacing:-0.339px;left:823.8px;transform:translateX(-50%);">Production:...</div><div class="t" style="font-size:11px;color:#555555;top:492.55px;line-height:12.64px;letter-spacing:-0.575px;right:1438.4px;">4K</div><div class="t" style="font-size:11px;color:#555555;top:531.84px;line-height:12.64px;letter-spacing:-0.575px;right:1438.4px;">2K</div><div class="t" style="font-size:11px;color:#555555;top:571.25px;line-height:12.64px;letter-spacing:-0.575px;right:1438.4px;">0K</div><div class="t" style="font-size:11px;color:#555555;top:494.94px;line-height:12.64px;letter-spacing:-0.098px;left:603.7px;transform:translateX(-50%);">28/07/2021</div><div class="t" style="font-size:11px;color:#555555;top:516.44px;line-height:12.64px;letter-spacing:-0.174px;left:565.8px;">Capacity: 2.788,35</div><div class="t" style="font-size:11px;color:#555555;top:538.75px;line-height:12.64px;letter-spacing:-0.156px;left:565.8px;">Occupation: 155,43</div><div class="t" style="font-size:11px;color:#555555;top:489.55px;line-height:12.64px;letter-spacing:-0.424px;right:695.3px;">90K</div><div class="t" style="font-size:11px;color:#555555;top:516.34px;line-height:12.64px;letter-spacing:-0.424px;right:695.3px;">60K</div><div class="t" style="font-size:11px;color:#555555;top:544.04px;line-height:12.64px;letter-spacing:-0.424px;right:695.3px;">30K</div><div class="t" style="font-size:11px;color:#555555;top:571.34px;line-height:12.64px;letter-spacing:-0.575px;right:695.3px;">0K</div>
</body></html>
